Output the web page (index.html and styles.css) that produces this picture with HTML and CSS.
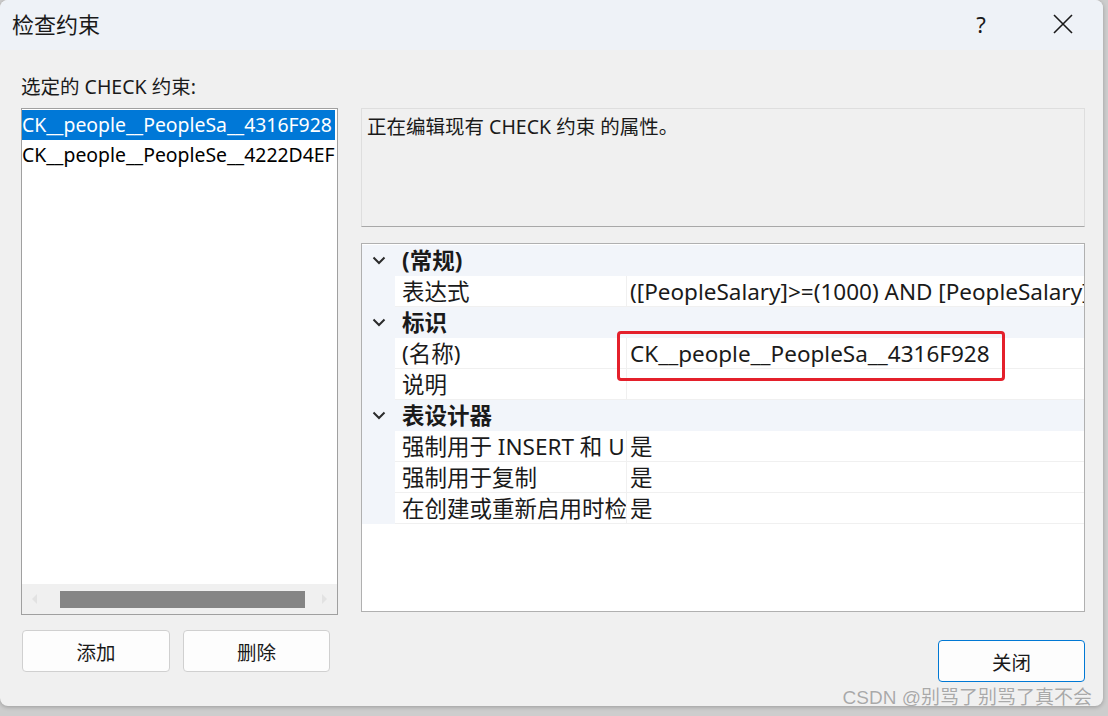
FILE: index.html
```html
<!DOCTYPE html>
<html lang="zh-CN">
<head>
<meta charset="utf-8">
<title>检查约束</title>
<link rel="stylesheet" href="styles.css">
</head>
<body>
<div class="window">
  <div class="titlebar">
    <span class="title">检查约束</span>
    <span class="tb-actions">
      <span class="help">?</span>
      <span class="close-x">
        <svg width="22" height="22" viewBox="0 0 22 22"><path d="M2 2 L20 20 M20 2 L2 20" stroke="#1a1a1a" stroke-width="1.6" fill="none"/></svg>
      </span>
    </span>
  </div>
  <div class="content">
    <div class="left">
      <div class="label">选定的 CHECK 约束:</div>
      <div class="listbox">
        <div class="items">
          <div class="item selected">CK__people__PeopleSa__4316F928</div>
          <div class="item">CK__people__PeopleSe__4222D4EF</div>
        </div>
        <div class="hscroll">
          <span class="arrow arrow-l"></span>
          <div class="track"><div class="thumb"></div></div>
          <span class="arrow arrow-r"></span>
        </div>
      </div>
      <div class="btnrow">
        <button class="btn">添加</button>
        <button class="btn">删除</button>
      </div>
    </div>
    <div class="right">
      <div class="desc">正在编辑现有 CHECK 约束 的属性。</div>
      <div class="grid">
        <div class="row cat">
          <span class="gut"><svg class="chev" width="14" height="9" viewBox="0 0 14 9"><polyline points="1.5,1.5 7,7 12.5,1.5" fill="none" stroke="#2b2b2b" stroke-width="2"/></svg></span>
          <span class="catname">(常规)</span>
        </div>
        <div class="row prop">
          <span class="gut"></span>
          <span class="name">表达式</span>
          <span class="val">([PeopleSalary]&gt;=(1000) AND [PeopleSalary]&lt;=(100000))</span>
        </div>
        <div class="row cat">
          <span class="gut"><svg class="chev" width="14" height="9" viewBox="0 0 14 9"><polyline points="1.5,1.5 7,7 12.5,1.5" fill="none" stroke="#2b2b2b" stroke-width="2"/></svg></span>
          <span class="catname">标识</span>
        </div>
        <div class="row prop">
          <span class="gut"></span>
          <span class="name">(名称)</span>
          <span class="val">CK__people__PeopleSa__4316F928</span>
        </div>
        <div class="row prop">
          <span class="gut"></span>
          <span class="name">说明</span>
          <span class="val"></span>
        </div>
        <div class="row cat">
          <span class="gut"><svg class="chev" width="14" height="9" viewBox="0 0 14 9"><polyline points="1.5,1.5 7,7 12.5,1.5" fill="none" stroke="#2b2b2b" stroke-width="2"/></svg></span>
          <span class="catname">表设计器</span>
        </div>
        <div class="row prop">
          <span class="gut"></span>
          <span class="name">强制用于 INSERT 和 UPDATE</span>
          <span class="val">是</span>
        </div>
        <div class="row prop">
          <span class="gut"></span>
          <span class="name">强制用于复制</span>
          <span class="val">是</span>
        </div>
        <div class="row prop">
          <span class="gut"></span>
          <span class="name">在创建或重新启用时检查现有数据</span>
          <span class="val">是</span>
        </div>
        <div class="highlight"></div>
      </div>
      <div class="footer">
        <button class="btn primary">关闭</button>
      </div>
    </div>
  </div>
  <div class="watermark">CSDN @别骂了别骂了真不会</div>
</div>
</body>
</html>
```

FILE: styles.css
```css
* { box-sizing: border-box; }

html, body {
  margin: 0;
  padding: 0;
  background: #cdcdcd;
  width: 1108px;
  height: 716px;
  overflow: hidden;
}

body {
  font-family: "Noto Sans", "Noto Sans CJK SC", sans-serif;
  color: #000;
}

.window {
  position: relative;
  width: 1103px;
  height: 706px;
  background: #f0f0f0;
  border-radius: 8px;
  overflow: hidden;
  box-shadow: 0 1px 4px rgba(0,0,0,0.25);
  display: flex;
  flex-direction: column;
}

.titlebar {
  height: 50px;
  flex: none;
  background: #eef2f7;
  display: flex;
  align-items: center;
  padding-left: 12px;
  padding-bottom: 3px;
}

.title {
  font-size: 22px;
  line-height: 28px;
  color: #1a1a1a;
}

.tb-actions {
  margin-left: auto;
  display: flex;
  align-items: center;
}

.help {
  font-size: 22px;
  line-height: 28px;
  color: #1a1a1a;
  width: 30px;
  text-align: center;
}

.close-x {
  display: flex;
  margin-left: 56px;
  margin-right: 29px;
}

.content {
  flex: 1;
  display: flex;
  gap: 23px;
  padding: 0 18px 0 21px;
}

.left {
  width: 317px;
  flex: none;
  display: flex;
  flex-direction: column;
  padding-top: 25px;
}

.label {
  font-size: 19.5px;
  line-height: 24px;
  height: 24px;
  margin-bottom: 9px;
  color: #1a1a1a;
}

.listbox {
  height: 507px;
  border: 1px solid #a0a0a0;
  background: #fff;
  display: flex;
  flex-direction: column;
}

.items {
  flex: 1;
  padding: 1px 2px 0 0;
  overflow: hidden;
}

.item {
  height: 30px;
  line-height: 30px;
  font-size: 19.4px;
  white-space: nowrap;
  overflow: hidden;
  color: #000;
}

.item.selected {
  background: #0078d7;
  color: #fff;
}

.hscroll {
  height: 30px;
  background: #f0f0f0;
  display: flex;
  align-items: center;
  padding: 0 10px;
}

.arrow {
  width: 0;
  height: 0;
  border-top: 5px solid transparent;
  border-bottom: 5px solid transparent;
}

.arrow-l { border-right: 5px solid #e2e2e2; }
.arrow-r { border-left: 5px solid #e2e2e2; }

.track {
  flex: 1;
  height: 17px;
  padding: 0 16px 0 23px;
}

.thumb {
  height: 17px;
  width: 245px;
  background: #858585;
}

.btnrow {
  display: flex;
  gap: 13px;
  margin-top: 15px;
  padding-left: 1px;
}

.btn {
  font-family: "Noto Sans CJK SC", sans-serif;
  font-size: 19.5px;
  height: 42px;
  width: 148px;
  background: #fdfdfd;
  border: 1px solid #d0d0d0;
  border-radius: 4px;
  color: #1a1a1a;
  padding: 0;
}

.btnrow .btn + .btn { width: 147px; }

.btn.primary {
  width: 147px;
  border-color: #0078d4;
}

.right {
  flex: 1;
  display: flex;
  flex-direction: column;
  padding-top: 58px;
}

.desc {
  height: 119px;
  border: 1px solid #dedede;
  border-bottom-color: #a8a8a8;
  background: #f0f0f0;
  font-size: 19.5px;
  line-height: 26px;
  padding: 5px 5px;
  color: #1a1a1a;
}

.grid {
  position: relative;
  margin-top: 16px;
  height: 369px;
  border: 1px solid #b0b0b0;
  background: #fff;
  padding-top: 1px;
  overflow: hidden;
}

.row {
  height: 31px;
  display: grid;
  grid-template-columns: 33px 232px 1fr;
  font-size: 22.5px;
  line-height: 31px;
}

.row.cat { background: #f2f5fa; }

.gut {
  display: flex;
  align-items: center;
  justify-content: center;
  background: #f2f5fa;
}

.chev { display: block; }

.catname {
  grid-column: 2 / 4;
  font-weight: bold;
  padding-left: 7px;
  color: #1a1a1a;
}

.name, .val {
  white-space: nowrap;
  overflow: hidden;
  border-bottom: 1px solid #f0f0f0;
  color: #1a1a1a;
}

.name {
  padding-left: 7px;
  border-right: 1px solid #f0f0f0;
}

.val { padding-left: 3px; }

.highlight {
  position: absolute;
  left: 255px;
  top: 87px;
  width: 388px;
  height: 50px;
  border: 3px solid #e4202b;
  border-radius: 4px;
}

.footer {
  display: flex;
  justify-content: flex-end;
  margin-top: 28px;
}

.watermark {
  position: absolute;
  right: 11px;
  bottom: -3px;
  font-family: "Liberation Sans", "Noto Sans CJK SC", sans-serif;
  font-size: 19px;
  line-height: 22px;
  color: #a9a9a9;
  text-shadow: 0 0 1px #fff;
}
```
